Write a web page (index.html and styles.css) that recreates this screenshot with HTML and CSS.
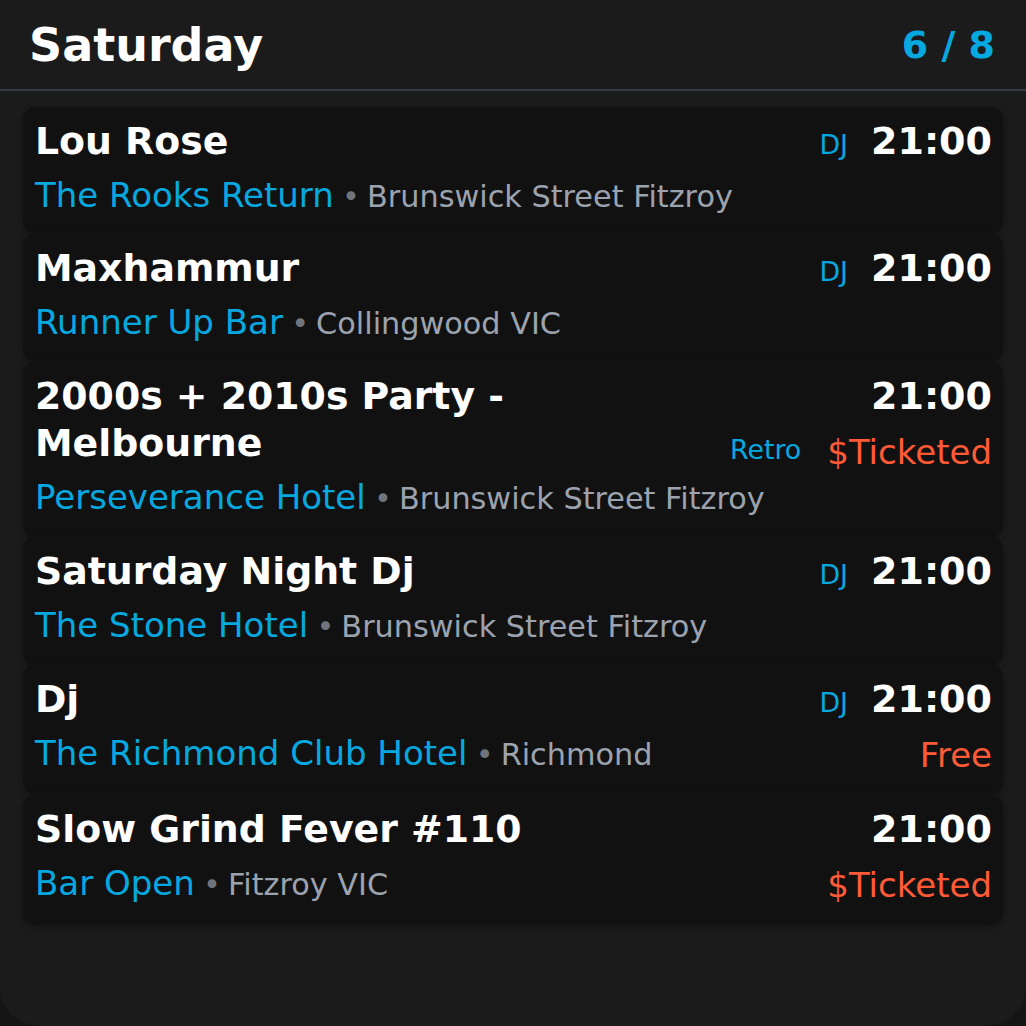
FILE: index.html
```html
<!DOCTYPE html>
<html lang="en">
<head>
<meta charset="utf-8">
<title>Saturday</title>
<link rel="stylesheet" href="styles.css">
</head>
<body>
<div class="panel">
  <header class="head">
    <h1 class="day">Saturday</h1>
    <div class="count">6 / 8</div>
  </header>
  <main class="list">
    <article class="card">
      <div class="left">
        <div class="title">Lou Rose</div>
        <div class="venue-row"><span class="venue">The Rooks Return</span><span class="dot"> • </span><span class="loc">Brunswick Street Fitzroy</span></div>
      </div>
      <div class="right">
        <div class="time-row"><span class="tag">DJ</span><span class="time">21:00</span></div>
      </div>
    </article>
    <article class="card">
      <div class="left">
        <div class="title">Maxhammur</div>
        <div class="venue-row"><span class="venue">Runner Up Bar</span><span class="dot"> • </span><span class="loc">Collingwood VIC</span></div>
      </div>
      <div class="right">
        <div class="time-row"><span class="tag">DJ</span><span class="time">21:00</span></div>
      </div>
    </article>
    <article class="card">
      <div class="left">
        <div class="title">2000s + 2010s Party - Melbourne</div>
        <div class="venue-row"><span class="venue">Perseverance Hotel</span><span class="dot"> • </span><span class="loc">Brunswick Street Fitzroy</span></div>
      </div>
      <div class="right">
        <div class="time-row"><span class="time">21:00</span></div>
        <div class="price-row"><span class="tag tag-low">Retro</span><span class="price">$Ticketed</span></div>
      </div>
    </article>
    <article class="card">
      <div class="left">
        <div class="title">Saturday Night Dj</div>
        <div class="venue-row"><span class="venue">The Stone Hotel</span><span class="dot"> • </span><span class="loc">Brunswick Street Fitzroy</span></div>
      </div>
      <div class="right">
        <div class="time-row"><span class="tag">DJ</span><span class="time">21:00</span></div>
      </div>
    </article>
    <article class="card">
      <div class="left">
        <div class="title">Dj</div>
        <div class="venue-row"><span class="venue">The Richmond Club Hotel</span><span class="dot"> • </span><span class="loc">Richmond</span></div>
      </div>
      <div class="right">
        <div class="time-row"><span class="tag">DJ</span><span class="time">21:00</span></div>
        <div class="price-row"><span class="price">Free</span></div>
      </div>
    </article>
    <article class="card">
      <div class="left">
        <div class="title">Slow Grind Fever #110</div>
        <div class="venue-row"><span class="venue">Bar Open</span><span class="dot"> • </span><span class="loc">Fitzroy VIC</span></div>
      </div>
      <div class="right">
        <div class="time-row"><span class="time">21:00</span></div>
        <div class="price-row"><span class="price">$Ticketed</span></div>
      </div>
    </article>
  </main>
</div>
</body>
</html>
```

FILE: styles.css
```css
html, body {
  margin: 0;
  padding: 0;
}
body {
  background: #151515;
  font-family: "DejaVu Sans", "Noto Sans", sans-serif;
  color: #ffffff;
}
.panel {
  width: 1026px;
  height: 1026px;
  box-sizing: border-box;
  background: #1b1b1b;
  border-radius: 0 0 40px 40px;
  overflow: hidden;
}
.head {
  display: flex;
  align-items: center;
  justify-content: space-between;
  padding: 17px 31px 14px 29px;
  border-bottom: 2px solid #363b46;
}
.day {
  margin: 0;
  font-size: 46px;
  line-height: 1.25;
  font-weight: 700;
  color: #ffffff;
}
.count {
  font-size: 38px;
  line-height: 1.25;
  font-weight: 700;
  color: #05a9e0;
}
.list {
  display: flex;
  flex-direction: column;
  gap: 1px;
  padding: 16px 23px 0;
}
.card {
  display: flex;
  gap: 24px;
  background: #111111;
  border-radius: 12px;
  padding: 11px 11px 17px 12px;
  box-shadow: 0 2px 6px rgba(0, 0, 0, 0.35);
}
.left {
  flex: 1;
  min-width: 0;
}
.title {
  font-size: 37.8px;
  line-height: 1.25;
  font-weight: 700;
  color: #ffffff;
}
.venue-row {
  margin-top: 9px;
  font-size: 34px;
  line-height: 1.25;
  white-space: nowrap;
}
.venue {
  color: #05a9e0;
}
.dot {
  font-size: 30.3px;
  color: #6f747d;
  white-space: pre;
  letter-spacing: -1.3px;
}
.loc {
  font-size: 30.3px;
  color: #9ca3af;
}
.right {
  display: flex;
  flex-direction: column;
  align-items: flex-end;
}
.time-row {
  display: flex;
  align-items: baseline;
  gap: 23px;
}
.time {
  font-size: 38px;
  line-height: 1.25;
  font-weight: 700;
  color: #ffffff;
}
.tag {
  font-size: 26.8px;
  line-height: 1.25;
  color: #05a9e0;
}
.price-row {
  margin-top: 11px;
  display: flex;
  align-items: center;
  gap: 26px;
}
.tag-low {
  padding-bottom: 5px;
}
.price {
  font-size: 34px;
  line-height: 1.25;
  color: #ff5a36;
}
```
